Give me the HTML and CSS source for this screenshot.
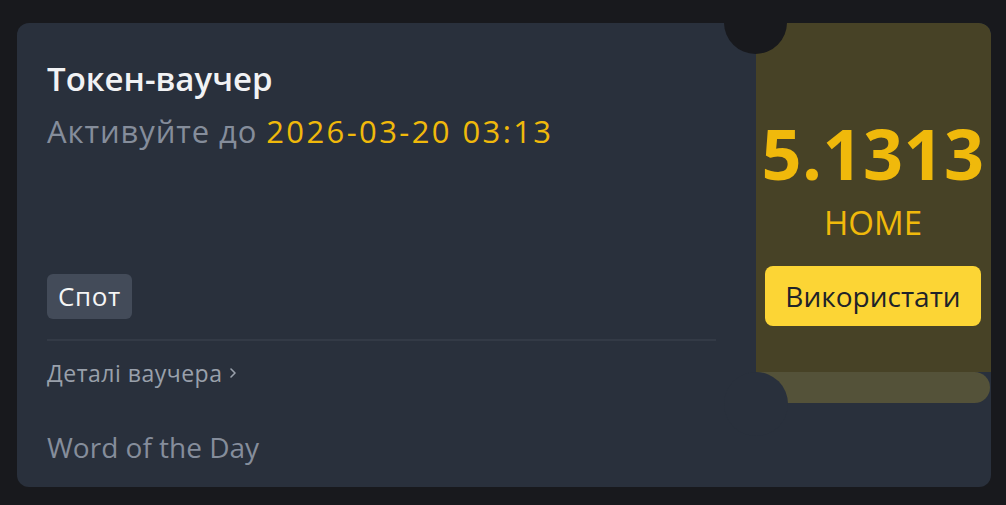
FILE: index.html
```html
<!DOCTYPE html>
<html lang="uk">
<head>
<meta charset="utf-8">
<link rel="stylesheet" href="styles.css">
</head>
<body>
<div class="card">
  <div class="main">
    <div class="title">Токен-ваучер</div>
    <div class="expiry">Активуйте до <span class="date">2026-03-20 03:13</span></div>
    <div class="tags"><span class="tag">Спот</span></div>
    <div class="divider"></div>
    <div class="details">Деталі ваучера <svg class="chev" width="10" height="14" viewBox="0 0 10 14"><path d="M3 3l4 4-4 4" fill="none" stroke="#9aa1ac" stroke-width="1.6" stroke-linecap="round" stroke-linejoin="round"/></svg></div>
    <div class="word">Word of the Day</div>
  </div>
  <div class="side">
    <div class="panel">
      <div class="amount">5.1313</div>
      <div class="coin">HOME</div>
      <button class="use">Використати</button>
    </div>
    <div class="strip"></div>
  </div>
  <span class="notch notch-top"></span>
  <span class="notch notch-bottom"></span>
</div>
</body>
</html>
```
FILE: styles.css
```css
html, body {
  margin: 0;
  padding: 0;
  background: #18191d;
}
body {
  padding: 23px 15px 0 17px;
  font-family: "Open Sans", Lato, sans-serif;
}
.card {
  position: relative;
  height: 464px;
  background: #29303c;
  border-radius: 12px;
  display: flex;
  overflow: hidden;
}
.main {
  flex: 1;
  padding: 36px 40px 0 30px;
  display: flex;
  flex-direction: column;
}
.title {
  color: #f1f2f4;
  font-size: 33px;
  font-weight: 600;
  line-height: 40px;
}
.expiry {
  margin-top: 12px;
  color: #858d9b;
  font-size: 31px;
  letter-spacing: 0.9px;
  line-height: 40px;
}
.date {
  color: #f0b90b;
  letter-spacing: 2.4px;
}
.tags {
  margin-top: 123px;
  display: flex;
}
.tag {
  background: #434b59;
  color: #f5f5f5;
  font-size: 26px;
  letter-spacing: 0.6px;
  line-height: 45px;
  height: 45px;
  padding: 0 11px;
  border-radius: 6px;
}
.divider {
  margin-top: 20px;
  height: 2px;
  background: #333a46;
}
.details {
  margin-top: 17px;
  color: #99a0ab;
  font-size: 23px;
  letter-spacing: 0.5px;
  line-height: 30px;
  display: flex;
  align-items: center;
  gap: 6px;
}
.word {
  margin-top: 41px;
  color: #858d9b;
  font-size: 28px;
  line-height: 36px;
}
.side {
  width: 235px;
  display: flex;
  flex-direction: column;
}
.panel {
  height: 349px;
  background: #474226;
  border-radius: 0 12px 0 0;
  display: flex;
  flex-direction: column;
  align-items: center;
  padding: 100px 10px 0 9px;
  box-sizing: border-box;
}
.amount {
  color: #f0b90b;
  font-size: 70px;
  font-weight: 700;
  letter-spacing: 0.5px;
  line-height: 60px;
}
.coin {
  margin-top: 20px;
  color: #f0b90b;
  font-size: 33px;
  font-weight: 500;
  line-height: 40px;
}
.use {
  margin-top: 23px;
  width: 216px;
  height: 60px;
  border: 0;
  border-radius: 8px;
  background: #fcd535;
  color: #1e2329;
  font-family: inherit;
  font-size: 28px;
  font-weight: 500;
}
.strip {
  height: 31px;
  width: 234px;
  background: #545239;
  border-radius: 0 16px 16px 0;
}
.notch {
  position: absolute;
  width: 63px;
  height: 63px;
  border-radius: 50%;
}
.notch-top {
  left: 707px;
  top: -32px;
  background: #18191d;
}
.notch-bottom {
  left: 707px;
  top: 349px;
  width: 64px;
  height: 64px;
  background: #29303c;
}
```
